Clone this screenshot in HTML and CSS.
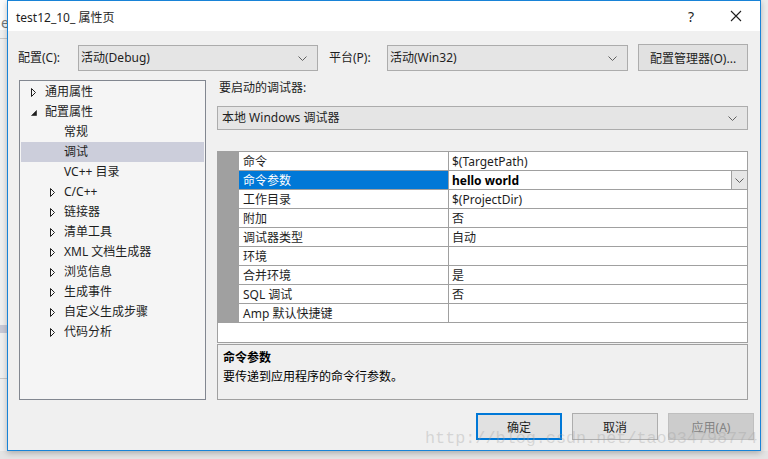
FILE: index.html
```
<!DOCTYPE html>
<html lang="zh">
<head>
    <meta charset="UTF-8">
    <title>test12_10_ 属性页</title>
    <link rel="stylesheet" href="styles.css">
</head>
<body>

    <!-- 后面那个窗口露出来的一条 -->
    <div class="behind">
        <div class="behind-top">e</div>
        <div class="behind-line"></div>
        <div class="behind-sel"></div>
        <div class="behind-line low"></div>
    </div>

    <div class="dialog">
        <div class="titlebar">
            <span class="title">test12_10_ 属性页</span>
            <span class="help">?</span>
            <span class="close">
                <svg width="12" height="12" viewBox="0 0 12 12"><path d="M1 1 L11 11 M11 1 L1 11" stroke="#1e1e1e" stroke-width="1.1" fill="none"/></svg>
            </span>
        </div>

        <div class="config-row">
            <span class="field-label">配置(C):</span>
            <div class="combo combo-config">
                <span>活动(Debug)</span>
                <svg class="chev" width="9" height="5" viewBox="0 0 9 5"><polyline points="0.5,0.5 4.5,4.5 8.5,0.5" stroke="#606060" fill="none"/></svg>
            </div>
            <span class="field-label platform-label">平台(P):</span>
            <div class="combo combo-platform">
                <span>活动(Win32)</span>
                <svg class="chev" width="9" height="5" viewBox="0 0 9 5"><polyline points="0.5,0.5 4.5,4.5 8.5,0.5" stroke="#606060" fill="none"/></svg>
            </div>
            <button class="btn btn-manager">配置管理器(O)...</button>
        </div>

        <div class="main">
            <div class="tree">
                <div class="node lv0"><svg class="arrow" width="6" height="9" viewBox="0 0 6 9"><polygon points="0.5,0.5 4.5,4.5 0.5,8.5" stroke="#1e1e1e" fill="none"/></svg>通用属性</div>
                <div class="node lv0"><svg class="arrow" width="6" height="9" viewBox="0 0 6 9"><polygon points="5.5,2.5 5.5,7.5 0.5,7.5" fill="#1e1e1e" stroke="#1e1e1e" stroke-width="0.6"/></svg>配置属性</div>
                <div class="node leaf">常规</div>
                <div class="node leaf selected">调试</div>
                <div class="node leaf">VC++ 目录</div>
                <div class="node lv1"><svg class="arrow" width="6" height="9" viewBox="0 0 6 9"><polygon points="0.5,0.5 4.5,4.5 0.5,8.5" stroke="#1e1e1e" fill="none"/></svg>C/C++</div>
                <div class="node lv1"><svg class="arrow" width="6" height="9" viewBox="0 0 6 9"><polygon points="0.5,0.5 4.5,4.5 0.5,8.5" stroke="#1e1e1e" fill="none"/></svg>链接器</div>
                <div class="node lv1"><svg class="arrow" width="6" height="9" viewBox="0 0 6 9"><polygon points="0.5,0.5 4.5,4.5 0.5,8.5" stroke="#1e1e1e" fill="none"/></svg>清单工具</div>
                <div class="node lv1"><svg class="arrow" width="6" height="9" viewBox="0 0 6 9"><polygon points="0.5,0.5 4.5,4.5 0.5,8.5" stroke="#1e1e1e" fill="none"/></svg>XML 文档生成器</div>
                <div class="node lv1"><svg class="arrow" width="6" height="9" viewBox="0 0 6 9"><polygon points="0.5,0.5 4.5,4.5 0.5,8.5" stroke="#1e1e1e" fill="none"/></svg>浏览信息</div>
                <div class="node lv1"><svg class="arrow" width="6" height="9" viewBox="0 0 6 9"><polygon points="0.5,0.5 4.5,4.5 0.5,8.5" stroke="#1e1e1e" fill="none"/></svg>生成事件</div>
                <div class="node lv1"><svg class="arrow" width="6" height="9" viewBox="0 0 6 9"><polygon points="0.5,0.5 4.5,4.5 0.5,8.5" stroke="#1e1e1e" fill="none"/></svg>自定义生成步骤</div>
                <div class="node lv1"><svg class="arrow" width="6" height="9" viewBox="0 0 6 9"><polygon points="0.5,0.5 4.5,4.5 0.5,8.5" stroke="#1e1e1e" fill="none"/></svg>代码分析</div>
            </div>

            <div class="pane">
                <div class="pane-label">要启动的调试器:</div>
                <div class="combo combo-debugger">
                    <span>本地 Windows 调试器</span>
                    <svg class="chev" width="9" height="5" viewBox="0 0 9 5"><polyline points="0.5,0.5 4.5,4.5 8.5,0.5" stroke="#606060" fill="none"/></svg>
                </div>

                <div class="prop-grid">
                    <div class="prop-row"><span class="gutter"></span><span class="prop-name">命令</span><span class="prop-value">$(TargetPath)</span></div>
                    <div class="prop-row active"><span class="gutter"></span><span class="prop-name">命令参数</span><span class="prop-value"><b>hello world</b><span class="drop"><svg width="9" height="5" viewBox="0 0 9 5"><polyline points="0.5,0.5 4.5,4.5 8.5,0.5" stroke="#606060" fill="none"/></svg></span></span></div>
                    <div class="prop-row"><span class="gutter"></span><span class="prop-name">工作目录</span><span class="prop-value">$(ProjectDir)</span></div>
                    <div class="prop-row"><span class="gutter"></span><span class="prop-name">附加</span><span class="prop-value">否</span></div>
                    <div class="prop-row"><span class="gutter"></span><span class="prop-name">调试器类型</span><span class="prop-value">自动</span></div>
                    <div class="prop-row"><span class="gutter"></span><span class="prop-name">环境</span><span class="prop-value"></span></div>
                    <div class="prop-row"><span class="gutter"></span><span class="prop-name">合并环境</span><span class="prop-value">是</span></div>
                    <div class="prop-row"><span class="gutter"></span><span class="prop-name">SQL 调试</span><span class="prop-value">否</span></div>
                    <div class="prop-row"><span class="gutter"></span><span class="prop-name">Amp 默认快捷键</span><span class="prop-value"></span></div>
                </div>

                <div class="description">
                    <div class="desc-title">命令参数</div>
                    <div class="desc-text">要传递到应用程序的命令行参数。</div>
                </div>
            </div>
        </div>

        <div class="actions">
            <button class="btn btn-ok">确定</button>
            <button class="btn">取消</button>
            <button class="btn btn-disabled">应用(A)</button>
        </div>

        <div class="watermark">http://blog.csdn.net/tao934798774</div>
    </div>

    <div class="behind-right"></div>

</body>
</html>
```

FILE: styles.css
```
body {
    margin: 0;
    width: 768px;
    height: 459px;
    overflow: hidden;
    display: flex;
    background-color: #e4e4e4;
    font-family: 'Noto Sans', 'Noto Sans CJK SC', sans-serif;
    font-size: 12px;
    color: #1e1e1e;
}
.behind {
    width: 7px;
    height: 451px;
    background-color: #f0f0f0;
    overflow: hidden;
}
.behind-top {
    height: 30px;
    background-color: #fbfbfb;
    color: #777;
    font-size: 14px;
    box-sizing: border-box;
    padding-top: 16px;
    padding-left: 1px;
    line-height: 14px;
    overflow: hidden;
}
.behind-line {
    height: 1px;
    background-color: #c8c8c8;
    margin-top: 8px;
}
.behind-sel {
    height: 8px;
    margin-top: 286px;
    background-color: #c8c9d6;
}
.behind-line.low {
    margin-top: 45px;
}
.behind-right {
    flex: 1;
    height: 451px;
    background-color: #ececec;
}
.dialog {
    position: relative;
    width: 754px;
    height: 451px;
    box-sizing: border-box;
    border: 1px solid #1883d7;
    background-color: #f0f0f0;
    box-shadow: 0 2px 6px rgba(0, 0, 0, 0.25);
}
.titlebar {
    height: 30px;
    background-color: #fff;
    display: flex;
    align-items: center;
    padding-left: 8px;
}
.title {
    flex: 1;
    font-size: 12px;
    padding-top: 1px;
}
.help {
    font-size: 14px;
    width: 16px;
    margin-right: 26px;
    color: #1e1e1e;
}
.close {
    width: 12px;
    height: 12px;
    margin-right: 18px;
    display: flex;
}
.config-row {
    display: flex;
    align-items: center;
    margin-top: 13px;
    height: 28px;
    padding-left: 10px;
}
.field-label {
    width: 60px;
    line-height: 16px;
}
.platform-label {
    width: 58px;
    margin-left: 11px;
}
.combo {
    display: flex;
    align-items: center;
    justify-content: space-between;
    height: 26px;
    box-sizing: border-box;
    border: 1px solid #acacac;
    background-color: #e5e5e5;
    padding: 0 10px 0 2px;
    line-height: 16px;
}
.combo-config {
    width: 240px;
}
.combo-platform {
    width: 241px;
}
.btn {
    font-family: inherit;
    font-size: 12px;
    color: #1e1e1e;
    height: 27px;
    border: 1px solid #adadad;
    background-color: #e1e1e1;
    padding: 0;
    box-sizing: border-box;
}
.btn-manager {
    width: 110px;
    margin-left: 10px;
    margin-top: -1px;
}
.main {
    display: flex;
    margin-top: 8px;
    height: 320px;
    padding-left: 11px;
    gap: 11px;
}
.tree {
    width: 187px;
    height: 320px;
    box-sizing: border-box;
    border: 1px solid #828790;
    background-color: #f5f5f5;
    padding-top: 1px;
}
.node {
    height: 20px;
    display: flex;
    align-items: center;
    margin: 0 1px;
    line-height: 16px;
}
.arrow {
    margin-right: 8px;
    flex-shrink: 0;
}
.lv0 {
    padding-left: 10px;
}
.lv1 {
    padding-left: 29px;
}
.leaf {
    padding-left: 43px;
}
.selected {
    background-color: #cccedb;
}
.pane {
    width: 531px;
}
.pane-label {
    height: 20px;
    line-height: 16px;
    padding-left: 2px;
}
.combo-debugger {
    margin-top: 6px;
    height: 24px;
    width: 531px;
    padding-left: 4px;
}
.prop-grid {
    margin-top: 21px;
    height: 192px;
    box-sizing: border-box;
    border: 1px solid #a0a0a0;
    background-color: #fff;
}
.prop-row {
    display: flex;
    height: 19px;
}
.gutter {
    width: 21px;
    background-color: #a0a0a0;
}
.prop-name, .prop-value {
    height: 19px;
    box-sizing: border-box;
    border-bottom: 1px solid #a0a0a0;
    line-height: 17px;
    padding-top: 1px;
    padding-left: 4px;
    white-space: nowrap;
}
.prop-name {
    width: 209px;
}
.prop-value {
    flex: 1;
    border-left: 1px solid #a0a0a0;
    padding-left: 3px;
    display: flex;
    align-items: center;
}
.active .prop-name {
    background-color: #0078d7;
    color: #fff;
}
.active .prop-value {
    padding-top: 0;
}
.active .prop-value b {
    flex: 1;
    font-weight: bold;
    color: #000;
    padding-top: 1px;
}
.drop {
    width: 16px;
    height: 18px;
    box-sizing: border-box;
    border-left: 1px solid #a0a0a0;
    background-color: #e6e6e6;
    display: flex;
    align-items: center;
    justify-content: center;
}
.description {
    margin-top: 1px;
    height: 56px;
    box-sizing: border-box;
    border: 1px solid #a0a0a0;
    padding: 3px 5px;
    line-height: 19px;
}
.desc-title {
    font-weight: bold;
    color: #000;
}
.desc-text {
    color: #000;
}
.actions {
    display: flex;
    justify-content: flex-end;
    gap: 10px;
    margin-top: 13px;
    padding-right: 6px;
}
.actions .btn {
    width: 86px;
}
.btn-ok {
    border: 2px solid #0078d7;
}
.btn-disabled {
    background-color: #cccccc;
    border-color: #bfbfbf;
    color: #838383;
}
.watermark {
    position: absolute;
    left: 417px;
    top: 428px;
    font-family: 'Liberation Mono', monospace;
    font-size: 16.8px;
    color: rgba(160, 160, 160, 0.35);
    white-space: nowrap;
    pointer-events: none;
}
```
